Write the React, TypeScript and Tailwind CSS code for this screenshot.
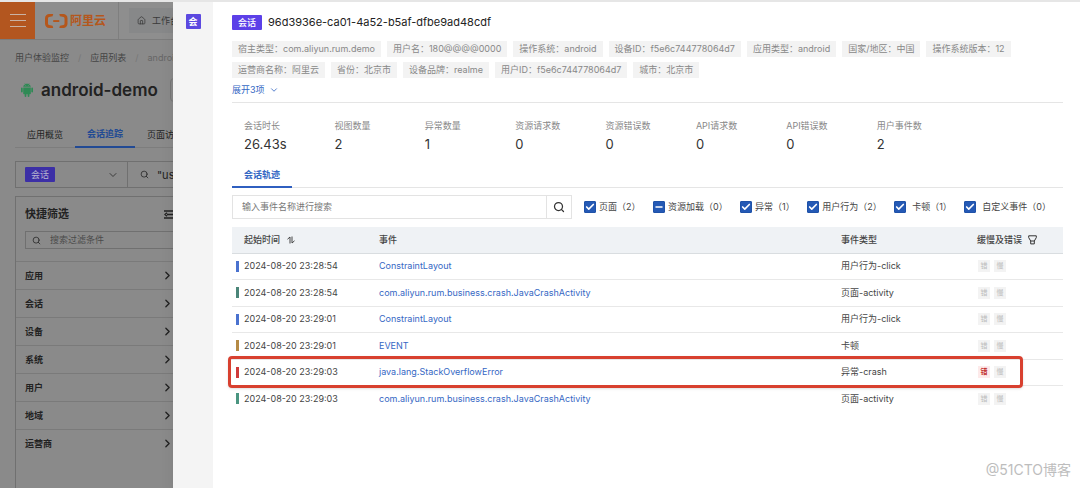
import React, { useEffect, useRef, useState } from "react";
import { AiFillAndroid } from "react-icons/ai";
import {
    Check,
    ChevronDown,
    ChevronRight,
    House,
    Minus,
    Search,
} from "lucide-react";

type Option = {
    id: string;
    label: string;
    state: "checked" | "mixed";
    box: string;
};

type EventRow = {
    time: string;
    name: string;
    type: string;
    color: string;
    error?: boolean;
};

const filters = ["应用", "会话", "设备", "系统", "用户", "地域", "运营商"];

const tags = [
    "宿主类型：com.aliyun.rum.demo",
    "用户名：180@@@@0000",
    "操作系统：android",
    "设备ID：f5e6c744778064d7",
    "应用类型：android",
    "国家/地区：中国",
    "操作系统版本：12",
    "运营商名称：阿里云",
    "省份：北京市",
    "设备品牌：realme",
    "用户ID：f5e6c744778064d7",
    "城市：北京市",
];

const stats = [
    ["会话时长", "26.43s"],
    ["视图数量", "2"],
    ["异常数量", "1"],
    ["资源请求数", "0"],
    ["资源错误数", "0"],
    ["API请求数", "0"],
    ["API错误数", "0"],
    ["用户事件数", "2"],
];

const options: Option[] = [
    { id: "view", label: "页面（2）", state: "checked", box: "gap-[3px]" },
    { id: "resource", label: "资源加载（0）", state: "mixed", box: "gap-[3px]" },
    { id: "exception", label: "异常（1）", state: "checked", box: "gap-[3px]" },
    { id: "action", label: "用户行为（2）", state: "checked", box: "gap-[3px]" },
    { id: "block", label: "卡顿（1）", state: "checked", box: "gap-1.5" },
    { id: "custom", label: "自定义事件（0）", state: "checked", box: "gap-1.5" },
];

const rows: EventRow[] = [
    {
        time: "2024-08-20 23:28:54",
        name: "ConstraintLayout",
        type: "用户行为-click",
        color: "bg-[#4a72cf]",
    },
    {
        time: "2024-08-20 23:28:54",
        name: "com.aliyun.rum.business.crash.JavaCrashActivity",
        type: "页面-activity",
        color: "bg-[#4a8578]",
    },
    {
        time: "2024-08-20 23:29:01",
        name: "ConstraintLayout",
        type: "用户行为-click",
        color: "bg-[#4a72cf]",
    },
    {
        time: "2024-08-20 23:29:01",
        name: "EVENT",
        type: "卡顿",
        color: "bg-[#b58a45]",
    },
    {
        time: "2024-08-20 23:29:03",
        name: "java.lang.StackOverflowError",
        type: "异常-crash",
        color: "bg-[#cf3a3a]",
        error: true,
    },
    {
        time: "2024-08-20 23:29:03",
        name: "com.aliyun.rum.business.crash.JavaCrashActivity",
        type: "页面-activity",
        color: "bg-[#4a9580]",
    },
];

const CloudLogo = () => (
    <svg width="23" height="14" viewBox="0 0 23 14" fill="#b5571c">
        <path d="M8.2 0H4.2A4.2 4.2 0 0 0 0 4.2v5.6A4.2 4.2 0 0 0 4.2 14h4L7.6 11.8 4 10.9A1.3 1.3 0 0 1 3 9.6V4.4A1.3 1.3 0 0 1 4 3.1L7.6 2.2Z" />
        <path d="M14.3 0h4a4.2 4.2 0 0 1 4.2 4.2v5.6a4.2 4.2 0 0 1-4.2 4.2h-4l.6-2.2 3.6-.9a1.3 1.3 0 0 0 1-1.3V4.4a1.3 1.3 0 0 0-1-1.3L14.9 2.2Z" />
        <path d="M8.2 6.1h6.1v1.9H8.2Z" />
    </svg>
);

const SortIcon = () => (
    <svg width="8" height="8" viewBox="0 0 8 8" fill="none" stroke="#444">
        <path d="M0.5 3.2 3 1v6.5M5 0.5V7L7.5 4.8" />
    </svg>
);

const FunnelIcon = () => (
    <svg width="9" height="10" viewBox="0 0 9 10" fill="none" stroke="#333">
        <path d="M0.7 0.8h7.6v1.8L6.3 6v2.9H2.7V6L0.7 2.6ZM2.7 6h3.6" />
    </svg>
);

const CollapseIcon = () => (
    <svg width="12" height="9" viewBox="0 0 12 9" fill="none" stroke="#222">
        <path d="M0 1h12M3 4.5h9M0 8h12M3 2.8 1 4.5l2 1.7" strokeWidth="1.3" />
    </svg>
);

const OptionBox = ({ option }: { option: Option }) => {
    const [checked, setChecked] = useState(option.state === "checked");
    const [mixed, setMixed] = useState(option.state === "mixed");
    const inputRef = useRef<HTMLInputElement>(null);

    useEffect(() => {
        if (inputRef.current) inputRef.current.indeterminate = mixed;
    }, [mixed]);

    const onChange = () => {
        setMixed(false);
        setChecked(mixed || !checked);
    };

    return (
        <label
            htmlFor={option.id}
            className={`flex items-center whitespace-nowrap ${option.box}`}
        >
            <span className="grid place-items-center">
                <input
                    ref={inputRef}
                    id={option.id}
                    type="checkbox"
                    checked={checked}
                    onChange={onChange}
                    className="col-start-1 row-start-1 size-3 appearance-none rounded-[1px] border border-[#1f52a8] checked:bg-[#2459b5] indeterminate:bg-[#2459b5]"
                />
                {mixed && (
                    <Minus
                        size={10}
                        strokeWidth={4}
                        className="pointer-events-none col-start-1 row-start-1 text-white"
                    />
                )}
                {checked && (
                    <Check
                        size={10}
                        strokeWidth={4}
                        className="pointer-events-none col-start-1 row-start-1 text-white"
                    />
                )}
            </span>
            {option.label}
        </label>
    );
};

/* 抽屉后面的页面 */
const BackPage = () => (
    <div className="min-h-screen bg-[#8a8a8a] text-[#222]">
        <header className="flex h-[38px] items-stretch border-b border-[#7c7c7c] bg-[#8e8e8e]">
            <button
                aria-label="菜单"
                className="flex w-[35px] flex-col items-center justify-center gap-[5px] bg-[#b3561f]"
            >
                <span className="h-px w-4 bg-[#c9b3a5]" />
                <span className="h-px w-4 bg-[#c9b3a5]" />
                <span className="h-px w-4 bg-[#c9b3a5]" />
            </button>
            <a
                href="#home"
                className="flex w-[84px] items-center gap-0.5 border-r border-[#7f7f7f] pl-[10px] text-xs font-bold text-[#b5571c]"
            >
                <CloudLogo />
                阿里云
            </a>
            <a
                href="#workbench"
                className="my-1.5 ml-[10px] flex items-center gap-1.5 bg-[#878889] px-2 whitespace-nowrap text-[#3a3a3a]"
            >
                <House size={9} />
                工作台
            </a>
        </header>
        <div className="pl-[15px]">
            <nav className="flex h-9 items-center whitespace-nowrap text-[#444]">
                <a href="#rum">用户体验监控</a>
                <span className="px-[9px] text-[#777]">/</span>
                <a href="#apps">应用列表</a>
                <span className="px-[9px] text-[#777]">/</span>
                <span className="text-[#666]">android-demo</span>
            </nav>
            <div className="flex h-7 items-center pl-1">
                <AiFillAndroid size={16} className="text-[#2f8a55]" />
                <h1 className="ml-1.5 text-[17px] font-semibold">android-demo</h1>
                <span className="ml-3 h-6 w-20 rounded-sm border border-[#777]" />
            </div>
            <div className="mt-[18px] flex h-[26px] border-b border-[#7d7d7d] whitespace-nowrap">
                <button className="w-[60px]">应用概览</button>
                <button className="-mb-px w-[60px] border-b-2 border-[#224a94] font-bold text-[#224a94]">
                    会话追踪
                </button>
                <button className="w-[60px]">页面访问</button>
            </div>
            <div className="mt-[13px] flex h-[27px] border border-[#707070]">
                <button className="flex w-28 items-center justify-between border-r border-[#707070] px-[9px] pr-2">
                    <span className="rounded-[1px] bg-[#3c2fa6] px-1.5 leading-[15px] text-[#b8b5d0]">
                        会话
                    </span>
                    <ChevronDown size={12} strokeWidth={1.5} />
                </button>
                <label className="flex flex-1 items-center pl-3" htmlFor="query">
                    <Search size={9} className="shrink-0" />
                    <input
                        id="query"
                        defaultValue={'"user.id"'}
                        className="ml-2 w-full text-[11px] outline-none"
                    />
                </label>
            </div>
            <aside className="mt-2 min-h-[300px] w-[174px] border border-b-0 border-[#707070]">
                <div className="flex h-[34px] items-center justify-between pl-[9px] pr-3">
                    <h2 className="text-[11px] font-bold">快捷筛选</h2>
                    <CollapseIcon />
                </div>
                <label
                    htmlFor="filter"
                    className="ml-[9px] flex h-[18px] items-center border border-[#707070] pl-1.5"
                >
                    <Search size={9} className="shrink-0" />
                    <input
                        id="filter"
                        placeholder="搜索过滤条件"
                        className="ml-[9px] w-24 outline-none placeholder:text-[#4a4a4a]"
                    />
                </label>
                <ul className="mt-3">
                    {filters.map((name) => (
                        <li key={name} className="border-t border-[#7a7a7a]">
                            <button className="flex h-[27px] w-full items-center justify-between pl-[9px] pr-3.5 font-bold">
                                {name}
                                <ChevronRight size={13} strokeWidth={2.5} />
                            </button>
                        </li>
                    ))}
                </ul>
            </aside>
        </div>
    </div>
);

const EventTable = () => (
    <table className="mt-2 h-[184px] w-full table-fixed text-left">
        <thead>
            <tr className="h-[26px] border-b border-[#d9dde0] bg-[#eff2f5] text-[#444]">
                <th className="w-[135px] pl-3 font-medium">
                    <button className="flex items-center gap-[7px]">
                        起始时间
                        <SortIcon />
                    </button>
                </th>
                <th className="pl-3 font-medium">事件</th>
                <th className="w-[136px] pl-3 font-medium">事件类型</th>
                <th className="w-[98px] pl-3 font-medium">
                    <button className="flex items-center gap-1.5">
                        缓慢及错误
                        <FunnelIcon />
                    </button>
                </th>
            </tr>
        </thead>
        <tbody>
            {rows.map((row, i) => (
                <tr
                    key={i}
                    className="relative border-b border-[#e8e8e8] last:border-b-0"
                >
                    <td>
                        <div className="flex items-center gap-[5px] pl-1 whitespace-nowrap">
                            <span className={`h-[11px] w-[3px] ${row.color}`} />
                            {row.time}
                        </div>
                        {row.error && (
                            <div className="pointer-events-none absolute -top-[3px] right-10 -bottom-[3px] -left-1 rounded-[4px] border-[3px] border-[#d8402f] shadow" />
                        )}
                    </td>
                    <td className="pl-3">
                        <a href="#event" className="text-[#3568c4]">
                            {row.name}
                        </a>
                    </td>
                    <td className="pl-3">{row.type}</td>
                    <td className="pl-[13px]">
                        <div className="flex gap-1 text-center text-[7px] leading-3 text-[#bbb]">
                            <span
                                className={
                                    row.error
                                        ? "w-3 bg-[#fdeaea] font-bold text-[#c22f2f]"
                                        : "w-3 bg-[#f3f3f3]"
                                }
                            >
                                错
                            </span>
                            <span className="w-3 bg-[#f3f3f3]">慢</span>
                        </div>
                    </td>
                </tr>
            ))}
        </tbody>
    </table>
);

const SessionDrawer = () => (
    <div className="absolute inset-y-0 right-0 left-[173px] flex bg-white shadow-lg">
        <div className="flex w-10 shrink-0 justify-center bg-[#f4f4f4] pt-3">
            <span className="size-[15px] rounded-[1px] bg-[#5c49e0] text-center leading-[15px] font-bold text-white">
                会
            </span>
        </div>
        <main className="min-w-0 flex-1 pt-3 pr-[17px] pl-[19px]">
            <div className="flex h-4 items-center gap-1.5">
                <span className="rounded-[1px] bg-[#5c40e8] px-1.5 leading-[15px] font-medium text-white">
                    会话
                </span>
                <h2 className="text-[11px] text-[#222]">
                    96d3936e-ca01-4a52-b5af-dfbe9ad48cdf
                </h2>
            </div>
            <ul className="mt-[11px] flex flex-wrap gap-x-1.5 gap-y-[5px] text-[#888]">
                {tags.map((tag) => (
                    <li key={tag} className="bg-[#f3f3f3] px-1.5 leading-4">
                        {tag}
                    </li>
                ))}
            </ul>
            <div className="flex h-[25px] items-center border-b border-[#e5e5e5]">
                <button className="flex items-center gap-1 text-[#3568c4]">
                    展开3项
                    <ChevronDown size={10} />
                </button>
            </div>
            <dl className="flex pt-[17px] pr-24 pl-3">
                {stats.map(([label, value]) => (
                    <div key={label} className="flex-1">
                        <dt className="leading-3 text-[#888]">{label}</dt>
                        <dd className="mt-1 text-[13px] leading-4 text-[#333]">
                            {value}
                        </dd>
                    </div>
                ))}
            </dl>
            <div className="mt-3 flex h-6 border-b border-[#e5e5e5]">
                <button className="-mb-px border-b-2 border-[#2f5fc0] px-3 font-bold text-[#3568c4]">
                    会话轨迹
                </button>
            </div>
            <form
                className="mt-[7px] flex items-center"
                onSubmit={(e) => e.preventDefault()}
            >
                <div className="flex h-6 w-[340px] border border-[#e3e3e3]">
                    <input
                        aria-label="输入事件名称进行搜索"
                        placeholder="输入事件名称进行搜索"
                        className="flex-1 px-[9px] outline-none placeholder:text-[#777]"
                    />
                    <button
                        aria-label="搜索"
                        className="flex w-[25px] items-center justify-center border-l border-[#e3e3e3] text-[#333]"
                    >
                        <Search size={12} strokeWidth={2.5} />
                    </button>
                </div>
                <div className="ml-3 flex flex-1 justify-between pr-3">
                    {options.map((option) => (
                        <OptionBox key={option.id} option={option} />
                    ))}
                </div>
            </form>
            <EventTable />
        </main>
    </div>
);

const App = () => (
    <div
        lang="zh-CN"
        className="relative h-screen overflow-hidden border-t-2 border-[#e6e6e6] font-['Inter','Noto_Sans_CJK_SC',sans-serif] text-[9px] leading-3 text-[#444]"
    >
        <BackPage />
        <SessionDrawer />
        <div className="absolute right-[9px] bottom-2 text-sm text-[#bdbdbd]">
            @51CTO博客
        </div>
    </div>
);

export default App;
